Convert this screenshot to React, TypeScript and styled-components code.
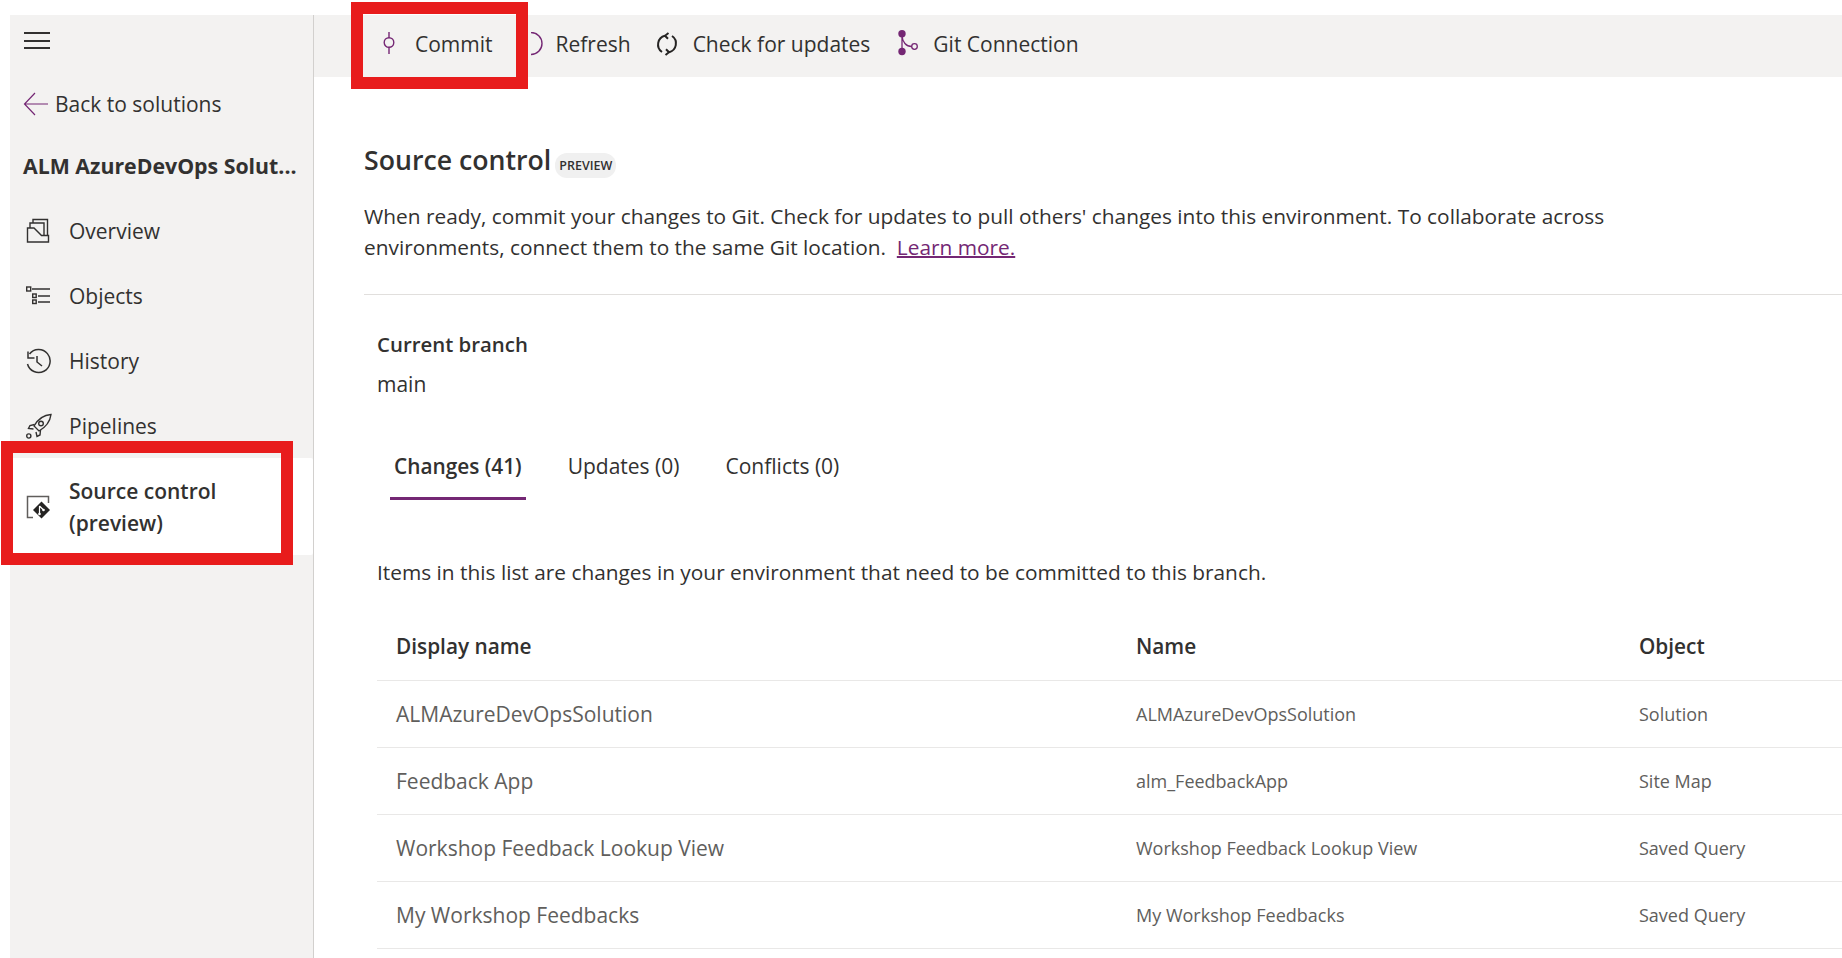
import styled, { createGlobalStyle } from 'styled-components';

const PURPLE = '#742774';

const GlobalStyle = createGlobalStyle`
  html, body {
    margin: 0;
    padding: 0;
    height: 100%;
    background: #fff;
    overflow: hidden;
  }
  body, button {
    font-family: "Open Sans", "Noto Sans", "Liberation Sans", sans-serif;
    color: #323130;
  }
`;

const NAV_ITEMS = [
  { label: 'Overview', icon: <OverviewIcon /> },
  { label: 'Objects', icon: <ObjectsIcon /> },
  { label: 'History', icon: <HistoryIcon /> },
  { label: 'Pipelines', icon: <RocketIcon /> },
];

const ROWS = [
  { display: 'ALMAzureDevOpsSolution', name: 'ALMAzureDevOpsSolution', object: 'Solution' },
  { display: 'Feedback App', name: 'alm_FeedbackApp', object: 'Site Map' },
  { display: 'Workshop Feedback Lookup View', name: 'Workshop Feedback Lookup View', object: 'Saved Query' },
  { display: 'My Workshop Feedbacks', name: 'My Workshop Feedbacks', object: 'Saved Query' },
];

function OverviewIcon() {
  return (
    <svg width="24" height="26" viewBox="0 0 24 26" fill="none" stroke="#323130" strokeWidth="1.4">
      <path d="M1.5 10H8l7.5 7.5h7V24H1.5z" />
      <path d="M4 10V5h14v12.5" />
      <path d="M7 5V1.5h14.500v16" />
    </svg>
  );
}

function ObjectsIcon() {
  return (
    <svg width="26" height="24" viewBox="0 0 26 24" fill="none" stroke="#323130" strokeWidth="1.4">
      <rect x="0.7" y="3" width="4" height="4" />
      <rect x="6.7" y="10" width="3.5" height="3.5" />
      <rect x="6.7" y="16" width="3.5" height="3.5" />
      <path d="M6 5h18M12 12h12M12 18h12" />
    </svg>
  );
}

function HistoryIcon() {
  return (
    <svg width="26" height="26" viewBox="0 0 26 26" fill="none" stroke="#323130" strokeWidth="1.5">
      <path d="M3.5 6A11.5 11.5 0 1 1 1.5 16" />
      <path d="M2 3.5V10h6.5" />
      <path d="M11 8v6l5 4" />
    </svg>
  );
}

function RocketIcon() {
  return (
    <svg width="26" height="26" viewBox="0 0 26 26" fill="none" stroke="#323130" strokeWidth="1.4">
      <path d="M25 1.5C17 2 12 6 8 13l5 5c7-4 11-9 12-16.5z" />
      <path d="M8.5 11.5l-4.5 1-1.5 3 5 .5" />
      <path d="M14.5 17l-.5 5-3 1.5-1-4.5" />
      <circle cx="15" cy="10.5" r="2.3" />
      <circle cx="2.8" cy="23" r="2.1" />
    </svg>
  );
}

function SourceControlIcon() {
  return (
    <svg width="24" height="24" viewBox="0 0 24 24" fill="none">
      <path d="M7 22.5H1.5v-21h21V8" stroke="#605e5c" strokeWidth="1.5" />
      <path d="M15.5 6.5L24 15l-8.5 8.5L7 15z" fill="#252423" />
      <path d="M13.5 11v8M13.5 11l4 4" stroke="#fff" strokeWidth="1.2" />
      <circle cx="13.5" cy="19" r="1.3" fill="#fff" />
      <circle cx="17.5" cy="15" r="1.3" fill="#fff" />
    </svg>
  );
}

function CommitIcon() {
  return (
    <svg width="12" height="24" viewBox="0 0 12 24" fill="none" stroke={PURPLE} strokeWidth="1.4">
      <circle cx="6" cy="10.5" r="4.8" />
      <path d="M6 0v5.7M6 15.3V22" />
    </svg>
  );
}

function RefreshIcon() {
  return (
    <svg width="22" height="24" viewBox="0 0 22 24" fill="none" stroke={PURPLE} strokeWidth="1.4">
      <path d="M5 0.5a11 11 0 0 1 0 22" />
    </svg>
  );
}

function SyncIcon() {
  return (
    <svg width="24" height="24" viewBox="0 0 24 24" fill="none" stroke="#252423" strokeWidth="2">
      <path d="M10 3.8A9 9 0 0 0 7 20" />
      <path d="M14 20.2A9 9 0 0 0 17 4" />
      <path d="M13.5 1L10 3.8l3 3" />
      <path d="M10.5 23l3.5-2.8-3-3" />
    </svg>
  );
}

function GitIcon() {
  return (
    <svg width="24" height="28" viewBox="0 0 24 28" fill="none">
      <circle cx="6" cy="3.7" r="3.7" fill={PURPLE} />
      <circle cx="6" cy="21.5" r="3.7" fill={PURPLE} />
      <circle cx="18.5" cy="16.5" r="2.8" stroke={PURPLE} strokeWidth="1.3" />
      <path d="M6 3.7v17.8M6 6c.5 6 4 10.5 9.7 10.5" stroke={PURPLE} strokeWidth="1.3" />
    </svg>
  );
}

function BackArrow() {
  return (
    <svg width="26" height="24" viewBox="0 0 26 24" fill="none" stroke={PURPLE} strokeWidth="1.2">
      <path d="M25 12H1.5M12 1L1.5 12 12 23" />
    </svg>
  );
}

function App() {
  return (
    <>
      <GlobalStyle />
      <Page>
        <Sidebar>
          <Hamburger aria-label="Menu">
            <span />
            <span />
            <span />
          </Hamburger>
          <BackLink>
            <BackArrow />
            Back to solutions
          </BackLink>
          <SolutionTitle>ALM AzureDevOps Solut...</SolutionTitle>
          <NavList>
            {NAV_ITEMS.map((item) => (
              <NavItem key={item.label}>
                <NavIcon>{item.icon}</NavIcon>
                {item.label}
              </NavItem>
            ))}
            <NavItem $active>
              <NavIcon>
                <SourceControlIcon />
              </NavIcon>
              <span>
                Source control
                <br />
                (preview)
              </span>
              <SidebarHighlight />
            </NavItem>
          </NavList>
        </Sidebar>
        <Main>
          <Toolbar>
            <CommitButton>
              <CommitIcon />
              Commit
              <ToolbarHighlight />
            </CommitButton>
            <RefreshButton>
              <RefreshIcon />
              Refresh
            </RefreshButton>
            <ToolButton>
              <SyncIcon />
              Check for updates
            </ToolButton>
            <GitButton>
              <GitIcon />
              Git Connection
            </GitButton>
          </Toolbar>
          <Content>
            <Heading>
              Source control
              <PreviewBadge>PREVIEW</PreviewBadge>
            </Heading>
            <Description>
              When ready, commit your changes to Git. Check for updates to pull others' changes into this environment. To
              collaborate across
              <br />
              environments, connect them to the same Git location. &nbsp;<LearnMore href="#">Learn more.</LearnMore>
            </Description>
            <Divider />
            <Branch>
              <BranchLabel>Current branch</BranchLabel>
              <BranchName>main</BranchName>
              <Tabs>
                <Tab $active>Changes (41)</Tab>
                <Tab>Updates (0)</Tab>
                <Tab>Conflicts (0)</Tab>
              </Tabs>
              <Hint>Items in this list are changes in your environment that need to be committed to this branch.</Hint>
              <Table>
                <HeaderRow>
                  <HeaderCell>Display name</HeaderCell>
                  <HeaderCell>Name</HeaderCell>
                  <HeaderCell>Object</HeaderCell>
                </HeaderRow>
                {ROWS.map((row) => (
                  <Row key={row.display}>
                    <DisplayCell>{row.display}</DisplayCell>
                    <Cell>{row.name}</Cell>
                    <Cell>{row.object}</Cell>
                  </Row>
                ))}
              </Table>
            </Branch>
          </Content>
        </Main>
      </Page>
    </>
  );
}

const Page = styled.div`
  display: flex;
  height: 958px;
  padding: 15px 0 0 10px;
  box-sizing: border-box;
  overflow: hidden;
`;

const Sidebar = styled.nav`
  flex: 0 0 304px;
  box-sizing: border-box;
  background: #f3f2f1;
  border-right: 1px solid #d2d0ce;
  display: flex;
  flex-direction: column;
`;

const Hamburger = styled.button`
  width: 26px;
  margin: 17px 0 0 14px;
  padding: 0;
  border: 0;
  background: none;
  display: flex;
  flex-direction: column;
  gap: 5.5px;

  span {
    height: 2px;
    background: #323130;
  }
`;

const BackLink = styled.div`
  display: flex;
  align-items: center;
  gap: 6px;
  margin: 40px 0 0 13px;
  font-size: 21px;
  height: 30px;
`;

const SolutionTitle = styled.div`
  margin: 32px 0 0 13px;
  font-size: 21.3px;
  font-weight: 700;
  line-height: 30px;
  white-space: nowrap;
`;

const NavList = styled.div`
  margin-top: 17px;
  display: flex;
  flex-direction: column;
`;

const NavItem = styled.div<{ $active?: boolean }>`
  position: relative;
  display: flex;
  align-items: center;
  height: ${({ $active }) => ($active ? '97px' : '65px')};
  background: ${({ $active }) => ($active ? '#fff' : 'transparent')};
  border-radius: 0 2px 2px 0;
  font-size: 21px;
  line-height: 32px;
  font-weight: ${({ $active }) => ($active ? 600 : 400)};
`;

const NavIcon = styled.span`
  flex: 0 0 59px;
  box-sizing: border-box;
  padding-left: 16px;
  display: flex;
  align-items: center;
`;

const SidebarHighlight = styled.span`
  position: absolute;
  left: -9px;
  top: -17px;
  width: 292px;
  height: 124px;
  box-sizing: border-box;
  border: 12px solid #e81c1c;
`;

const Main = styled.main`
  flex: 1;
  min-width: 0;
  display: flex;
  flex-direction: column;
`;

const Toolbar = styled.div`
  flex: 0 0 62px;
  box-sizing: border-box;
  padding: 0 0 4px 69px;
  background: #f3f2f1;
  display: flex;
  align-items: center;
`;

const ToolButton = styled.div`
  position: relative;
  display: flex;
  align-items: center;
  gap: 14px;
  font-size: 21px;
  white-space: nowrap;
  margin-right: 26px;
`;

const CommitButton = styled(ToolButton)`
  gap: 20px;
  margin-right: 33px;
`;

const RefreshButton = styled(ToolButton)`
  gap: 8px;
  margin-right: 24px;
`;

const GitButton = styled(ToolButton)`
  gap: 13px;
`;

const ToolbarHighlight = styled.span`
  position: absolute;
  left: -32px;
  top: -28px;
  width: 177px;
  height: 87px;
  box-sizing: border-box;
  border: 12px solid #e81c1c;
`;

const Content = styled.div`
  padding-left: 50px;
`;

const Heading = styled.h1`
  margin: 65px 0 0;
  display: flex;
  align-items: center;
  font-size: 26.7px;
  line-height: 36px;
  font-weight: 600;
`;

const PreviewBadge = styled.span`
  margin: 11px 0 0 4px;
  padding: 0 4px;
  border-radius: 12px;
  background: #f0f0f0;
  font-size: 12.5px;
  line-height: 25px;
  font-weight: 600;
`;

const Description = styled.p`
  margin: 23px 0 0;
  font-size: 20.85px;
  line-height: 31px;
  white-space: nowrap;
`;

const LearnMore = styled.a`
  color: ${PURPLE};
  text-decoration: underline;
  text-decoration-thickness: 2px;
`;

const Divider = styled.div`
  height: 1px;
  margin-top: 31px;
  background: #e1dfdd;
`;

const Branch = styled.section`
  padding-left: 13px;
`;

const BranchLabel = styled.div`
  margin-top: 34px;
  font-size: 20.4px;
  font-weight: 600;
  line-height: 30px;
`;

const BranchName = styled.div`
  margin-top: 10px;
  font-size: 21px;
  line-height: 30px;
`;

const Tabs = styled.div`
  display: flex;
  margin-top: 50px;
  gap: 38px;
  padding-left: 13px;
`;

const Tab = styled.div<{ $active?: boolean }>`
  padding: 0 4px 14px;
  font-size: ${({ $active }) => ($active ? '20.8px' : '21px')};
  line-height: 34px;
  font-weight: ${({ $active }) => ($active ? 600 : 400)};
  border-bottom: 3px solid ${({ $active }) => ($active ? PURPLE : 'transparent')};
`;

const Hint = styled.p`
  margin: 57px 0 0;
  font-size: 20.85px;
  line-height: 30px;
`;

const Table = styled.div`
  margin-top: 27px;
`;

const HeaderRow = styled.div`
  display: grid;
  grid-template-columns: 740px 503px 1fr;
  height: 66px;
  align-items: center;
  padding-left: 19px;
  border-bottom: 1px solid #e9e8e7;
`;

const HeaderCell = styled.div`
  font-size: 20.8px;
  font-weight: 600;
  padding-bottom: 2px;
`;

const Row = styled(HeaderRow)`
  height: 66px;
  color: #605e5c;
`;

const DisplayCell = styled.div`
  font-size: 21px;
`;

const Cell = styled.div`
  font-size: 18px;
`;

export default App;
